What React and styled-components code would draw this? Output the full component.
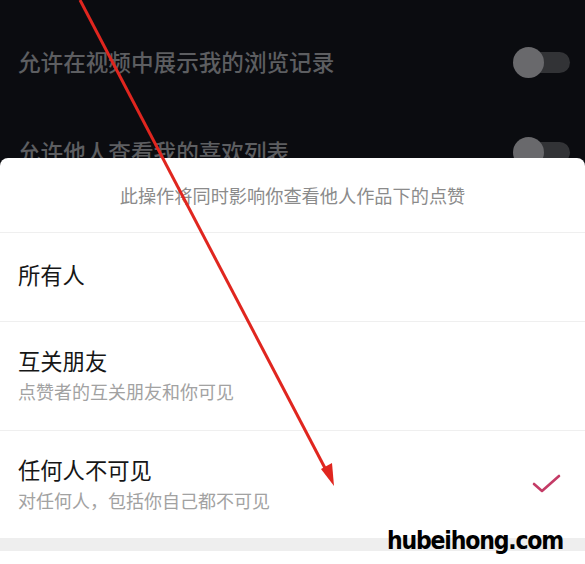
import React from 'react'
import styled, { createGlobalStyle } from 'styled-components'

const Global = createGlobalStyle`
  html, body { margin: 0; padding: 0; background: #0b0c10; }
  body { font-family: "Noto Sans CJK SC", "Noto Sans", sans-serif; }
`

const Page = styled.div`
  position: relative;
  width: 585px;
  height: 564px;
  overflow: hidden;
  background: #0b0c10;
  display: flex;
  flex-direction: column;
`

const DarkList = styled.div`
  height: 158px;
  overflow: hidden;
  padding-top: 17px;
  box-sizing: border-box;
`

const DarkRow = styled.div`
  height: 90px;
  display: flex;
  align-items: center;
  justify-content: space-between;
  padding: 0 15px 0 18px;
`

const DarkLabel = styled.span`
  font-size: 22.6px;
  font-weight: 500;
  color: #5d5e61;
  line-height: 1;
`

const Toggle = styled.div`
  position: relative;
  width: 57px;
  height: 31px;
  display: flex;
  align-items: center;
  &::before {
    content: '';
    position: absolute;
    left: 14px;
    right: 0;
    height: 21px;
    border-radius: 10.5px;
    background: #323336;
  }
  &::after {
    content: '';
    position: absolute;
    left: 0;
    width: 31px;
    height: 31px;
    border-radius: 50%;
    background: #69696c;
  }
`

const Sheet = styled.div`
  flex: 1;
  background: #fff;
  border-radius: 8px 8px 0 0;
  display: flex;
  flex-direction: column;
`

const Header = styled.div`
  height: 74px;
  display: flex;
  align-items: center;
  justify-content: center;
  font-size: 18.2px;
  color: #8b8b8b;
  border-bottom: 1px solid #efefef;
`

const Option = styled.div`
  height: ${p => p.$h}px;
  box-sizing: border-box;
  display: flex;
  align-items: center;
  justify-content: space-between;
  padding: 0 22px ${p => p.$pb || 0}px 18px;
  border-bottom: ${p => (p.$last ? 'none' : '1px solid #efefef')};
`

const OptionText = styled.div`
  display: flex;
  flex-direction: column;
  gap: 10px;
`

const Title = styled.span`
  font-size: 22.3px;
  color: #161616;
  line-height: 23px;
`

const Sub = styled.span`
  font-size: 18px;
  color: #a2a2a2;
  line-height: 19px;
`

const Band = styled.div`
  height: 13px;
  background: #eeeeee;
`

const Tail = styled.div`
  flex: 1;
  background: #fff;
`

const Watermark = styled.div`
  position: absolute;
  right: 22px;
  bottom: 9px;
  font-family: "DejaVu Sans", sans-serif;
  font-stretch: condensed;
  font-weight: 900;
  font-size: 24.5px;
  letter-spacing: -1.2px;
  color: #000;
`

const Arrow = styled.svg`
  position: absolute;
  left: 0;
  top: 0;
  pointer-events: none;
`

const Check = () => (
  <svg width="32" height="24" viewBox="0 0 32 24">
    <path d="M3 12 L11 19 L28 4" fill="none" stroke="#c43b66" strokeWidth="2.6" strokeLinecap="round" strokeLinejoin="round" />
  </svg>
)

export default function App() {
  return (
    <>
      <Global />
      <Page>
        <DarkList>
          <DarkRow>
            <DarkLabel>允许在视频中展示我的浏览记录</DarkLabel>
            <Toggle />
          </DarkRow>
          <DarkRow>
            <DarkLabel>允许他人查看我的喜欢列表</DarkLabel>
            <Toggle />
          </DarkRow>
        </DarkList>
        <Sheet>
          <Header>此操作将同时影响你查看他人作品下的点赞</Header>
          <Option $h={89} $pb={6}>
            <OptionText>
              <Title>所有人</Title>
            </OptionText>
          </Option>
          <Option $h={109} $pb={2}>
            <OptionText>
              <Title>互关朋友</Title>
              <Sub>点赞者的互关朋友和你可见</Sub>
            </OptionText>
          </Option>
          <Option $h={107} $pb={2} $last>
            <OptionText>
              <Title>任何人不可见</Title>
              <Sub>对任何人，包括你自己都不可见</Sub>
            </OptionText>
            <Check />
          </Option>
          <Band />
          <Tail />
        </Sheet>
        <Watermark>hubeihong.com</Watermark>
        <Arrow width="585" height="564" viewBox="0 0 585 564">
          <line x1="80" y1="0" x2="326" y2="470" stroke="#e0261f" strokeWidth="3" />
          <polygon points="334,486 321,469 332,463" fill="#e0261f" />
        </Arrow>
      </Page>
    </>
  )
}
